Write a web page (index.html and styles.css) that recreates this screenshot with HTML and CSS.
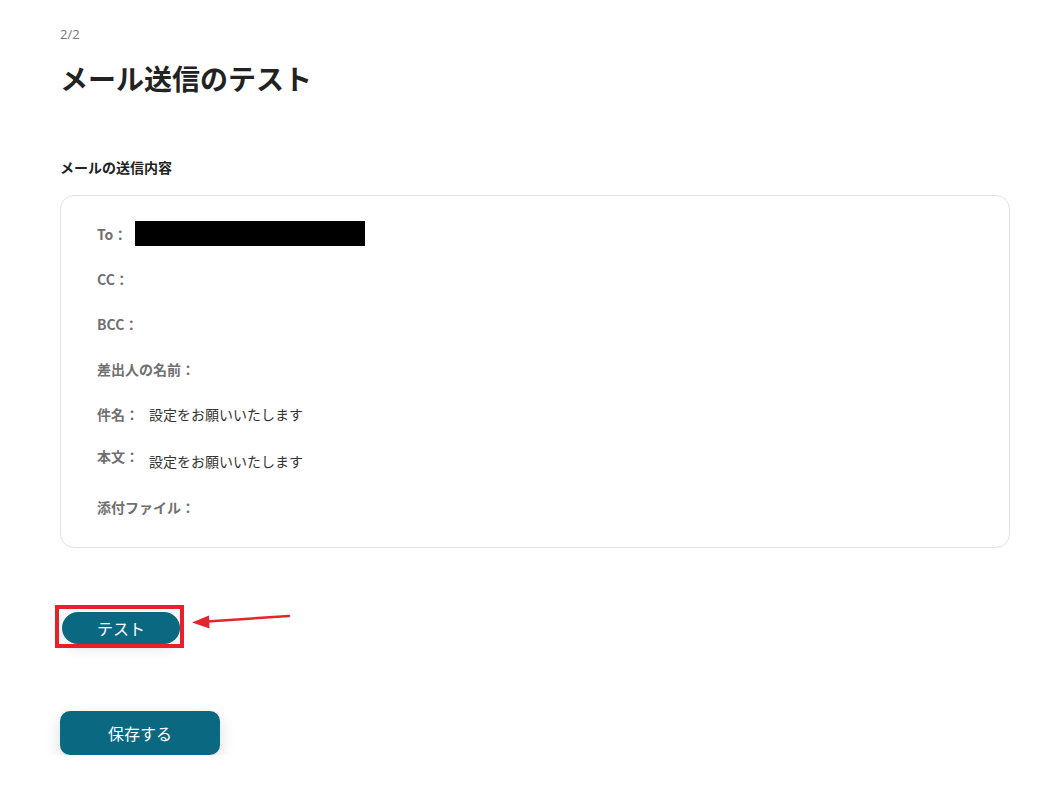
FILE: index.html
```html
<!DOCTYPE html>
<html lang="ja">
<head>
<meta charset="utf-8">
<link rel="stylesheet" href="styles.css">
</head>
<body>
<main class="page">
  <div class="step">2/2</div>
  <h1 class="title">メール送信のテスト</h1>
  <h2 class="section-label">メールの送信内容</h2>
  <section class="card">
    <div class="row"><span class="label">To：</span><span class="redact"></span></div>
    <div class="row"><span class="label">CC：</span></div>
    <div class="row"><span class="label">BCC：</span></div>
    <div class="row"><span class="label">差出人の名前：</span></div>
    <div class="row"><span class="label">件名：</span><span class="value">設定をお願いいたします</span></div>
    <div class="row row-body"><span class="label">本文：</span><span class="value">設定をお願いいたします</span></div>
    <div class="row"><span class="label">添付ファイル：</span></div>
  </section>
  <div class="test-area">
    <button class="btn-test">テスト</button>
    <span class="highlight"></span>
    <svg class="arrow" width="100" height="20" viewBox="0 0 100 20">
      <line x1="98" y1="4" x2="16" y2="9.5" stroke="#e3262b" stroke-width="2.5" stroke-linecap="round"/>
      <polygon points="1,10.5 18,3.5 18.5,16.5" fill="#e3262b"/>
    </svg>
  </div>
  <button class="btn-save">保存する</button>
</main>
</body>
</html>
```
FILE: styles.css
```css
* { box-sizing: border-box; }
html, body { margin: 0; padding: 0; background: #fff; }
body {
  font-family: "Noto Sans CJK JP", "Noto Sans", "Open Sans", sans-serif;
  color: #333;
}
.page {
  padding: 24px 43px 0 60px;
  width: 1053px;
}
.step {
  font-family: "Open Sans", "Noto Sans CJK JP", sans-serif;
  font-size: 13px;
  line-height: 20px;
  color: #777;
}
.title {
  margin: 16px 0 0;
  font-size: 28px;
  line-height: 36px;
  font-weight: 700;
  color: #222;
}
.section-label {
  margin: 61px 0 0;
  font-size: 14px;
  line-height: 20px;
  font-weight: 700;
  color: #222;
}
.card {
  margin-top: 18px;
  width: 950px;
  height: 353px;
  border: 1px solid #e2e2e2;
  border-radius: 14px;
  padding: 25px 36px 0;
  display: flex;
  flex-direction: column;
  gap: 20px;
}
.row {
  display: flex;
  align-items: center;
  height: 25px;
  gap: 9px;
}
.row-body { height: 28px; align-items: flex-start; }
.row-body .value { margin-top: 5px; }
.label {
  font-size: 14px;
  font-weight: 700;
  color: #707070;
  line-height: 20px;
  white-space: nowrap;
}
.value {
  font-size: 14px;
  color: #333;
  line-height: 20px;
  margin-left: 1px;
}
.redact {
  display: block;
  width: 230px;
  height: 25px;
  background: #000;
  margin-left: -1px;
}
.test-area {
  position: relative;
  margin-top: 64px;
  height: 32px;
  padding-left: 2px;
}
.btn-test {
  display: block;
  width: 118px;
  height: 32px;
  border: none;
  border-radius: 16px;
  background: #0a6881;
  color: #fff;
  font-family: inherit;
  font-size: 16px;
  line-height: 32px;
  padding: 0;
  box-shadow: 0 4px 14px rgba(0, 0, 0, 0.12);
}
.highlight {
  position: absolute;
  left: -5px;
  top: -7px;
  width: 129px;
  height: 43px;
  border: 4px solid #e8202a;
}
.arrow {
  position: absolute;
  left: 131px;
  top: 0;
}
.btn-save {
  display: block;
  margin-top: 67px;
  width: 160px;
  height: 44px;
  border: none;
  border-radius: 10px;
  background: #0a6881;
  color: #fff;
  font-family: inherit;
  font-size: 16px;
  padding: 0;
  box-shadow: 0 6px 16px rgba(0, 0, 0, 0.14);
}
```
